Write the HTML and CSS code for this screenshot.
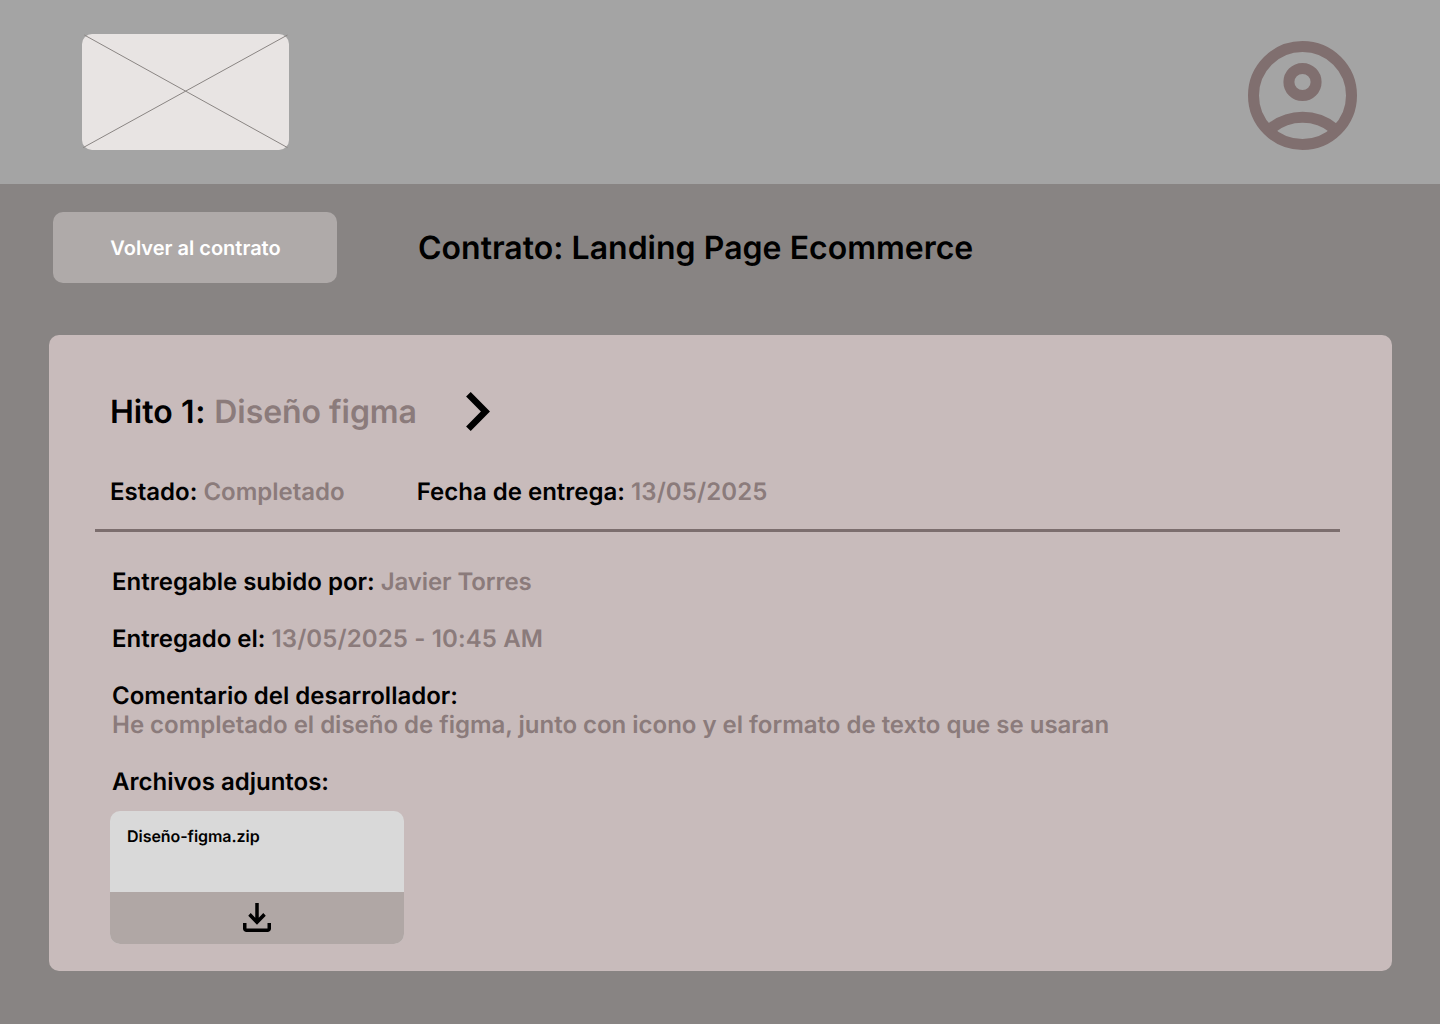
FILE: index.html
```html
<!DOCTYPE html>
<html lang="es">
<head>
<meta charset="utf-8">
<title>Contrato: Landing Page Ecommerce</title>
<link rel="stylesheet" href="styles.css">
</head>
<body>
<header class="topbar">
  <svg class="logo" viewBox="0 0 207 116" aria-label="Logo">
    <rect width="207" height="116" rx="10" fill="#e8e4e3"/>
    <path d="M2.300 1 205.500 113.600M1.200 113.600 205.500 1" stroke="#8a8583" stroke-width="1" fill="none"/>
  </svg>
  <svg class="avatar" viewBox="0 0 109 109" fill="none" stroke="#806f6f" stroke-width="11" aria-label="Perfil">
    <circle cx="54.500" cy="54.500" r="49"/>
    <circle cx="54.500" cy="41" r="13.600"/>
    <path d="M23 87.400A50 50 0 0 1 86 87.400"/>
  </svg>
</header>
<div class="heading">
  <button class="back">Volver al contrato</button>
  <h1 class="title">Contrato: Landing Page Ecommerce</h1>
</div>
<main class="card">
  <div class="milestone">
    <h2 class="title">Hito <span class="number">1:</span> <span class="value name">Diseño figma</span></h2>
    <svg class="chevron" viewBox="0 0 24 39" fill="none" stroke="#000" stroke-width="6.500"><path d="M2.400 2.300 19.400 19.500 2.400 36.700"/></svg>
  </div>
  <div class="status">
    <p>Estado: <span class="value">Completado</span></p>
    <p>Fecha de entrega: <span class="value date">13/05/2025</span></p>
  </div>
  <hr class="rule">
  <section class="details">
    <p>Entregable subido por: <span class="value person">Javier Torres</span></p>
    <p>Entregado el: <span class="value date">13/05/2025 - 10:45 AM</span></p>
    <p>Comentario del desarrollador:<br><span class="value comment">He completado el diseño de figma, junto con icono y el formato de texto que se usaran</span></p>
    <p>Archivos adjuntos:</p>
  </section>
  <div class="file">
    <div class="filename">Diseño-figma.zip</div>
    <div class="download">
      <svg class="dl-icon" viewBox="4 4 16 16" preserveAspectRatio="none"><path d="m12 16-5-5 1.400-1.450 2.600 2.600V4h2v8.150l2.600-2.600L17 11zM6 20q-.825 0-1.412-.587T4 18v-3h2v3h12v-3h2v3q0 .825-.587 1.413T18 20z"/></svg>
    </div>
  </div>
</main>
</body>
</html>
```
FILE: styles.css
```css
* { box-sizing: border-box; }
body { margin: 0; min-height: 1024px; background: #888483; color: #000; font: 600 24px/29px Inter, sans-serif; font-optical-sizing: none; text-rendering: geometricPrecision; }
h1, h2, p { margin: 0; }
.topbar { height: 184px; background: #a4a4a4; padding: 34px 83px 34px 82px; display: flex; justify-content: space-between; }
.logo { width: 207px; height: 116px; }
.avatar { width: 109px; height: 109px; margin-top: 7px; }
.heading { display: flex; align-items: center; gap: 81px; padding: 28px 53px 0; }
.back { width: 284px; height: 71px; border: 0; border-radius: 10px; background: #afaaa9; color: #fff; font: 600 20px/24px Inter, sans-serif; font-optical-sizing: none; text-rendering: inherit; padding: 0 0 0 1px; }
.title { font-size: 32px; line-height: 39px; font-weight: 600; word-spacing: 0.15px; }
.number { letter-spacing: 0.7px; }
.name { letter-spacing: -0.07px; }
.value { color: #8b7b7b; }
.date { letter-spacing: 0.12px; }
.person { letter-spacing: -0.1px; }
.comment { letter-spacing: -0.01px; }
.card { margin: 52px 48px 0 49px; height: 636px; border-radius: 10px; background: #c8bbbb; padding: 57px 52px 0 46px; }
.milestone { display: flex; align-items: flex-start; height: 40px; gap: 49px; padding-left: 15px; }
.chevron { width: 24px; height: 39px; }
.status { display: flex; gap: 72px; padding: 45px 0 0 15px; }
.rule { height: 3px; margin: 23px 0 0; border: 0; background: #7c6e6e; }
.details { display: flex; flex-direction: column; gap: 28px; padding: 35px 0 0 17px; }
.file { width: 294px; height: 133px; margin: 15px 0 0 15px; border-radius: 10px; overflow: hidden; background: #d9d9d9; }
.filename { height: 81px; padding: 16px 17px; font-size: 16px; line-height: 19px; letter-spacing: -0.05px; }
.download { height: 52px; background: #b0a7a5; display: flex; justify-content: center; padding-top: 11px; }
.dl-icon { width: 28px; height: 29px; }
```
